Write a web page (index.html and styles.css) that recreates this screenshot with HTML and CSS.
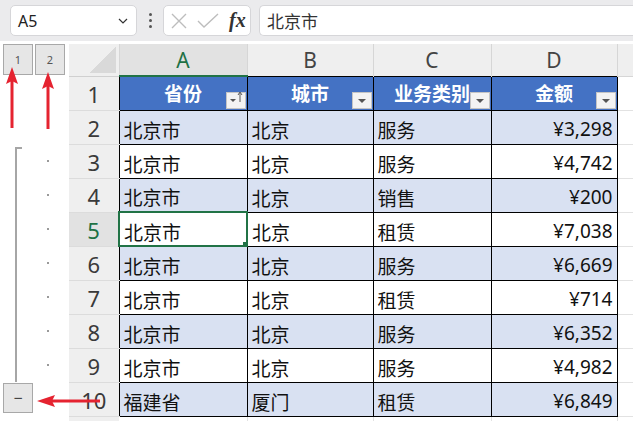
FILE: index.html
```html
<!DOCTYPE html>
<html>
	<head>
		<meta charset="utf-8">
		<title>分级显示</title>
		<link rel="stylesheet" href="styles.css">
	</head>
	<body>
		<div class="topbar">
			<div class="namebox">
				<span>A5</span>
				<svg width="10" height="6" viewBox="0 0 10 6"><path d="M1 1 L5 5 L9 1" fill="none" stroke="#333" stroke-width="1.2"/></svg>
			</div>
			<div class="menu-dots"><i></i><i></i><i></i></div>
			<div class="fxbox">
				<svg width="18" height="18" viewBox="0 0 18 18"><path d="M2 2 L16 16 M16 2 L2 16" stroke="#bdbdbd" stroke-width="1.4"/></svg>
				<svg width="22" height="16" viewBox="0 0 22 16"><path d="M1 8 L7 14 L21 1" fill="none" stroke="#bdbdbd" stroke-width="1.4"/></svg>
				<span class="fx">fx</span>
			</div>
			<div class="formula">北京市</div>
		</div>

		<div class="main">
			<div class="gutter">
				<div class="levels">
					<div class="lvl">1</div>
					<div class="lvl">2</div>
				</div>
				<div class="spacer"></div>
				<div class="group">
					<div class="bracket"></div>
					<div class="marks">
						<div class="mark"><i></i></div>
						<div class="mark"><i></i></div>
						<div class="mark"><i></i></div>
						<div class="mark"><i></i></div>
						<div class="mark"><i></i></div>
						<div class="mark"><i></i></div>
						<div class="mark"><i></i></div>
					</div>
				</div>
				<div class="last"><div class="lvl minus">&minus;</div></div>
			</div>

			<table class="sheet">
				<colgroup>
					<col class="c-rh">
					<col class="c-a">
					<col class="c-b">
					<col class="c-c">
					<col class="c-d">
					<col class="c-e">
				</colgroup>
				<tr class="colhead">
					<th class="corner"></th>
					<th class="sel">A</th>
					<th>B</th>
					<th>C</th>
					<th>D</th>
					<th class="e"></th>
				</tr>
				<tr class="row">
					<td class="rh">1</td>
					<td class="hd">省份<span class="fbtn"><svg width="18" height="14" viewBox="0 0 18 14"><path d="M3 9 H9 L6 12 Z" fill="#555"/><path d="M13 12 V3 M11 5 L13 2 L15 5" fill="none" stroke="#555" stroke-width="1"/></svg></span></td>
					<td class="hd">城市<span class="fbtn"><svg width="8" height="5" viewBox="0 0 8 5"><path d="M0 0 H8 L4 4 Z" fill="#555"/></svg></span></td>
					<td class="hd">业务类别<span class="fbtn"><svg width="8" height="5" viewBox="0 0 8 5"><path d="M0 0 H8 L4 4 Z" fill="#555"/></svg></span></td>
					<td class="hd">金额<span class="fbtn"><svg width="8" height="5" viewBox="0 0 8 5"><path d="M0 0 H8 L4 4 Z" fill="#555"/></svg></span></td>
					<td class="e"></td>
				</tr>
				<tr class="row band">
					<td class="rh">2</td><td>北京市</td><td>北京</td><td>服务</td><td class="num">¥3,298</td><td class="e"></td>
				</tr>
				<tr class="row">
					<td class="rh">3</td><td>北京市</td><td>北京</td><td>服务</td><td class="num">¥4,742</td><td class="e"></td>
				</tr>
				<tr class="row band">
					<td class="rh">4</td><td>北京市</td><td>北京</td><td>销售</td><td class="num">¥200</td><td class="e"></td>
				</tr>
				<tr class="row">
					<td class="rh sel">5</td><td class="active">北京市</td><td>北京</td><td>租赁</td><td class="num">¥7,038</td><td class="e"></td>
				</tr>
				<tr class="row band">
					<td class="rh">6</td><td>北京市</td><td>北京</td><td>服务</td><td class="num">¥6,669</td><td class="e"></td>
				</tr>
				<tr class="row">
					<td class="rh">7</td><td>北京市</td><td>北京</td><td>租赁</td><td class="num">¥714</td><td class="e"></td>
				</tr>
				<tr class="row band">
					<td class="rh">8</td><td>北京市</td><td>北京</td><td>服务</td><td class="num">¥6,352</td><td class="e"></td>
				</tr>
				<tr class="row">
					<td class="rh">9</td><td>北京市</td><td>北京</td><td>服务</td><td class="num">¥4,982</td><td class="e"></td>
				</tr>
				<tr class="row band">
					<td class="rh">10</td><td>福建省</td><td>厦门</td><td>租赁</td><td class="num">¥6,849</td><td class="e"></td>
				</tr>
				<tr class="row blank">
					<td class="rh"></td><td></td><td></td><td></td><td></td><td class="e"></td>
				</tr>
			</table>
		</div>

		<!-- 红色标注箭头 -->
		<svg class="arrows" width="633" height="421" viewBox="0 0 633 421">
			<path d="M12 128 V80" stroke="#e52330" stroke-width="3"/>
			<path d="M12 67 L18 84 L12 81 L6 84 Z" fill="#e52330"/>
			<path d="M48 129 V85" stroke="#e52330" stroke-width="3"/>
			<path d="M48 72 L54 89 L48 86 L42 89 Z" fill="#e52330"/>
			<path d="M100 401 H52" stroke="#e52330" stroke-width="3"/>
			<path d="M37 401 L55 395 L52 401 L55 407 Z" fill="#e52330"/>
		</svg>
	</body>
</html>
```

FILE: styles.css
```css
* {
	margin: 0;
	padding: 0;
	box-sizing: border-box;
}

html,
body {
	width: 633px;
	height: 421px;
	overflow: hidden;
	background: #fff;
	font-family: "Noto Sans", "Noto Sans CJK SC", sans-serif;
}

body {
	position: relative;
}

/* 编辑栏 */
.topbar {
	height: 41px;
	background: #ebebed;
	display: flex;
	align-items: center;
	padding-left: 10px;
}

.namebox {
	width: 127px;
	height: 31px;
	background: #fff;
	border: 1px solid #d6d6d9;
	border-radius: 5px;
	display: flex;
	align-items: center;
	justify-content: space-between;
	padding: 0 8px 0 7px;
	font-size: 16px;
	color: #222;
}

.menu-dots {
	width: 26px;
	display: flex;
	flex-direction: column;
	align-items: center;
	gap: 3px;
}

.menu-dots i {
	width: 3px;
	height: 3px;
	border-radius: 50%;
	background: #555;
}

.fxbox {
	width: 88px;
	height: 31px;
	background: #fff;
	border: 1px solid #d6d6d9;
	border-radius: 5px;
	display: flex;
	align-items: center;
	padding-left: 6px;
	gap: 9px;
}

.fxbox .fx {
	font-family: "Liberation Serif", serif;
	font-style: italic;
	font-weight: bold;
	font-size: 20px;
	color: #333;
	margin-left: 1px;
}

.formula {
	flex: 1;
	height: 31px;
	margin-left: 8px;
	background: #fff;
	border: 1px solid #d6d6d9;
	border-right: none;
	border-radius: 5px 0 0 5px;
	padding-left: 7px;
	font-family: "Noto Sans CJK SC", sans-serif;
	font-size: 17px;
	line-height: 29px;
	color: #333;
}

/* 工作表区域 */
.main {
	display: flex;
	padding-top: 3px;
}

.gutter {
	width: 69px;
	flex: none;
	display: flex;
	flex-direction: column;
}

.levels {
	height: 32px;
	display: flex;
	gap: 2px;
	padding-left: 3px;
}

.lvl {
	width: 30px;
	height: 31px;
	background: #e6e6e6;
	border: 1px solid #a8a8a8;
	font-size: 11px;
	color: #555;
	display: flex;
	align-items: center;
	justify-content: center;
}

.spacer {
	height: 68px;
}

.group {
	height: 238px;
	display: flex;
}

.bracket {
	margin: 3px 0 0 15px;
	width: 7px;
	border-left: 2px solid #a6a6a6;
	border-top: 2px solid #a6a6a6;
}

.marks {
	margin-left: 24px;
	width: 4px;
	display: flex;
	flex-direction: column;
}

.mark {
	height: 34px;
	display: flex;
	align-items: center;
	justify-content: center;
}

.mark i {
	width: 2px;
	height: 2px;
	background: #9a9a9a;
}

.last {
	height: 34px;
	padding: 1px 0 0 3px;
}

.lvl.minus {
	height: 30px;
	font-size: 16px;
	color: #444;
}

.sheet {
	border-collapse: collapse;
	table-layout: fixed;
	width: 564px;
}

.c-rh { width: 50px; }
.c-a { width: 128px; }
.c-b { width: 126px; }
.c-c { width: 118px; }
.c-d { width: 126px; }
.c-e { width: 16px; }

.colhead th {
	height: 32px;
	background: #efefef;
	font-weight: normal;
	font-size: 21px;
	color: #444;
	border-right: 1px solid #d6d6d6;
	border-bottom: none;
}

.colhead th.corner {
	background: linear-gradient(to bottom right, transparent 50%, #d9d9d9 50%) right 3px bottom 3px / 27px 26px no-repeat, #efefef;
	border-bottom: 1px solid #d0d0d0;
}

.colhead th.sel {
	background: #e2e2e2;
	color: #1e7145;
	border-bottom: 2px solid #217346;
}

.colhead th.e {
	border-bottom: 1px solid #d6d6d6;
	border-right: none;
}

.row td {
	height: 34px;
	border: 1px solid #000;
	padding: 4px 4px 0;
	font-family: "Noto Sans CJK SC", sans-serif;
	font-size: 19px;
	color: #111;
	white-space: nowrap;
	overflow: hidden;
	vertical-align: middle;
}

.row.band td {
	background: #d9e1f2;
}

.row td.rh {
	background: #efefef;
	border: none;
	border-bottom: 1px solid #dcdcdc;
	font-family: "Noto Sans", sans-serif;
	font-size: 22px;
	color: #3a3a3a;
	text-align: center;
	padding: 1px 0 0;
}

.row td.rh.sel {
	background: #e2e2e2;
	color: #1e7145;
}

.row td.hd {
	position: relative;
	background: #4472c4;
	color: #fff;
	font-weight: bold;
	text-align: center;
	padding: 0 0 2px;
}

.row td.num {
	text-align: right;
	font-family: "Noto Sans", "Noto Sans CJK SC", sans-serif;
	font-size: 19px;
	padding-right: 4px;
}

.row td.e {
	background: #fff;
	border: none;
	border-bottom: 1px solid #e2e2e2;
}

.row.blank td {
	border-top: none;
	border-left: none;
	border-right: 1px solid #e2e2e2;
	border-bottom: none;
}

.row.blank td.rh {
	border-right: none;
}

/* 当前单元格 */
.row td.active {
	position: relative;
	border: 2px solid #217346;
}

.row td.active::after {
	content: '';
	position: absolute;
	right: -4px;
	bottom: -4px;
	width: 6px;
	height: 6px;
	background: #217346;
	border: 1px solid #fff;
}

/* 筛选按钮 */
.fbtn {
	position: absolute;
	right: 1px;
	bottom: 1px;
	width: 20px;
	height: 17px;
	background: #f3f3f3;
	border: 1px solid #c4c4c4;
	display: flex;
	align-items: flex-end;
	justify-content: center;
	padding-bottom: 4px;
}

.fbtn svg {
	display: block;
}

.row td.hd:first-of-type .fbtn {
	padding-bottom: 0;
	align-items: center;
}

.arrows {
	position: absolute;
	left: 0;
	top: 0;
	pointer-events: none;
}
```
